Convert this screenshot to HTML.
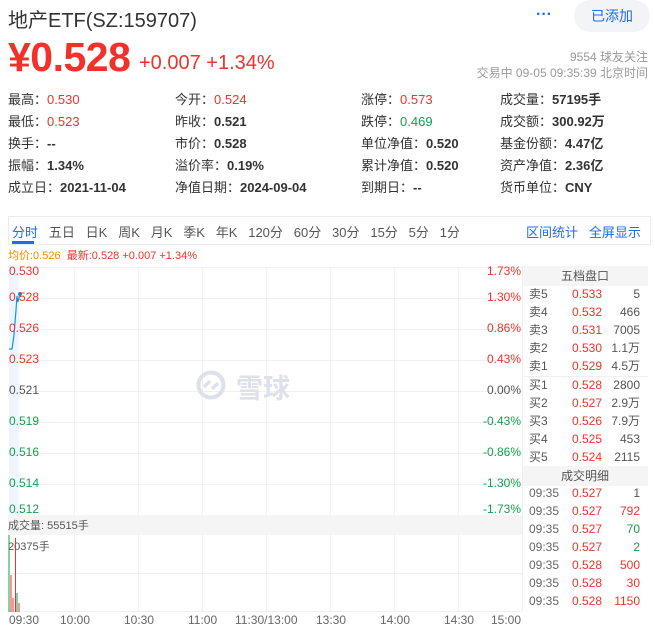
<!DOCTYPE html>
<html><head><meta charset="utf-8"><style>
*{margin:0;padding:0;box-sizing:border-box}
body{width:655px;height:631px;background:#fff;font-family:"Liberation Sans","Noto Sans CJK SC",sans-serif;color:#333;position:relative;overflow:hidden}
.a{position:absolute;white-space:nowrap}
.r{color:#f2322a}.g{color:#12a14b}.b{font-weight:bold}
.q{font-size:13px;color:#333}
.gl{position:absolute;background:#f0f0f0}
.ax{font-size:12px;position:absolute;white-space:nowrap}
.ob{position:absolute;left:522px;width:126px;font-size:12px;height:18px;line-height:18px}
.ob span{position:absolute}
</style></head><body>
<div class="a" style="left:8px;top:4px;font-size:20px;color:#333">地产ETF(SZ:159707)</div>
<div class="a" style="left:536px;top:6px;font-size:16px;color:#1e6ee8;font-weight:bold">···</div>
<div class="a" style="left:574px;top:0px;width:76px;height:32px;border-radius:16px;background:#f2f4f7;color:#1e6ee8;font-size:14px;line-height:32px;text-align:center">已添加</div>
<div class="a r b" style="left:8px;top:34px;font-size:41px;letter-spacing:-0.5px">¥0.528</div>
<div class="a r" style="left:139px;top:52px;font-size:20px">+0.007 +1.34%</div>
<div class="a" style="right:7px;top:48px;font-size:12px;color:#999">9554 球友关注</div>
<div class="a" style="right:7px;top:64px;font-size:12px;color:#999">交易中 09-05 09:35:39 北京时间</div>

<div class="a q" style="left:8px;top:89px">最高：<span class="r">0.530</span></div>
<div class="a q" style="left:175px;top:89px">今开：<span class="r">0.524</span></div>
<div class="a q" style="left:361px;top:89px">涨停：<span class="r">0.573</span></div>
<div class="a q" style="left:500px;top:89px">成交量：<b>57195手</b></div>
<div class="a q" style="left:8px;top:111px">最低：<span class="r">0.523</span></div>
<div class="a q" style="left:175px;top:111px">昨收：<b>0.521</b></div>
<div class="a q" style="left:361px;top:111px">跌停：<span class="g">0.469</span></div>
<div class="a q" style="left:500px;top:111px">成交额：<b>300.92万</b></div>
<div class="a q" style="left:8px;top:133px">换手：<b>--</b></div>
<div class="a q" style="left:175px;top:133px">市价：<b>0.528</b></div>
<div class="a q" style="left:361px;top:133px">单位净值：<b>0.520</b></div>
<div class="a q" style="left:500px;top:133px">基金份额：<b>4.47亿</b></div>
<div class="a q" style="left:8px;top:155px">振幅：<b>1.34%</b></div>
<div class="a q" style="left:175px;top:155px">溢价率：<b>0.19%</b></div>
<div class="a q" style="left:361px;top:155px">累计净值：<b>0.520</b></div>
<div class="a q" style="left:500px;top:155px">资产净值：<b>2.36亿</b></div>
<div class="a q" style="left:8px;top:177px">成立日：<b>2021-11-04</b></div>
<div class="a q" style="left:175px;top:177px">净值日期：<b>2024-09-04</b></div>
<div class="a q" style="left:361px;top:177px">到期日：<b>--</b></div>
<div class="a q" style="left:500px;top:177px">货币单位：<b>CNY</b></div>

<div class="a" style="left:8px;top:216px;width:643px;height:29px;border:1px solid #ececec"></div>
<div class="a" style="left:12px;top:222px;font-size:13px;color:#555;word-spacing:0">
<span style="color:#1e6ee8">分时</span>&nbsp;&nbsp;&nbsp;五日&nbsp;&nbsp;&nbsp;日K&nbsp;&nbsp;&nbsp;周K&nbsp;&nbsp;&nbsp;月K&nbsp;&nbsp;&nbsp;季K&nbsp;&nbsp;&nbsp;年K&nbsp;&nbsp;&nbsp;120分&nbsp;&nbsp;&nbsp;60分&nbsp;&nbsp;&nbsp;30分&nbsp;&nbsp;&nbsp;15分&nbsp;&nbsp;&nbsp;5分&nbsp;&nbsp;&nbsp;1分</div>
<div class="a" style="left:12px;top:241px;width:22px;height:3px;background:#1e6ee8"></div>
<div class="a" style="left:526px;top:222px;font-size:13px;color:#1e6ee8">区间统计&nbsp;&nbsp;&nbsp;全屏显示</div>
<div class="a" style="left:8px;top:247px;font-size:11px"><span style="color:#f08c00">均价:0.526</span>&nbsp;&nbsp;<span class="r">最新:0.528 +0.007 +1.34%</span></div>

<!-- grid -->
<div class="gl" style="left:8px;top:267px;width:514px;height:1px"></div>
<div class="gl" style="left:8px;top:298px;width:514px;height:1px"></div>
<div class="gl" style="left:8px;top:329px;width:514px;height:1px"></div>
<div class="gl" style="left:8px;top:360px;width:514px;height:1px"></div>
<div class="gl" style="left:8px;top:391px;width:514px;height:1px"></div>
<div class="gl" style="left:8px;top:422px;width:514px;height:1px"></div>
<div class="gl" style="left:8px;top:453px;width:514px;height:1px"></div>
<div class="gl" style="left:8px;top:484px;width:514px;height:1px"></div>
<div class="gl" style="left:8px;top:573px;width:514px;height:1px"></div>
<div class="gl" style="left:8px;top:611px;width:514px;height:1px"></div>
<div class="gl" style="left:74px;top:267px;width:1px;height:345px"></div>
<div class="gl" style="left:138px;top:267px;width:1px;height:345px"></div>
<div class="gl" style="left:202px;top:267px;width:1px;height:345px"></div>
<div class="gl" style="left:266px;top:267px;width:1px;height:345px"></div>
<div class="gl" style="left:330px;top:267px;width:1px;height:345px"></div>
<div class="gl" style="left:394px;top:267px;width:1px;height:345px"></div>
<div class="gl" style="left:458px;top:267px;width:1px;height:345px"></div>
<div class="a" style="left:9px;top:267px;width:10px;height:248px;background:#eef5fe"></div>
<div class="a" style="left:8px;top:515px;width:514px;height:20px;background:#f5f5f5"></div>
<div class="a" style="left:8px;top:517px;font-size:11px;color:#555">成交量: 55515手</div>
<div class="a" style="left:8px;top:538px;font-size:11px;color:#555">20375手</div>
<svg class="a" style="left:0;top:260px" width="30" height="360">
<polyline points="9,89 12,89 14,75 16,50 17,36 18,42 19,38 20,33" fill="none" stroke="#1a8cff" stroke-width="1.2"/>
<circle cx="20" cy="34" r="2" fill="#1a8cff"/>
<line x1="9" y1="275" x2="9" y2="352" stroke="#12a14b"/>
<line x1="11" y1="315" x2="11" y2="352" stroke="#f2322a"/>
<line x1="13" y1="338" x2="13" y2="352" stroke="#f2322a"/>
<line x1="15.5" y1="278" x2="15.5" y2="352" stroke="#f2322a"/>
<line x1="17" y1="333" x2="17" y2="352" stroke="#12a14b"/>
<line x1="19" y1="343" x2="19" y2="352" stroke="#f2322a"/>
</svg>
<svg class="a" style="left:196px;top:370px" width="32" height="30"><circle cx="15" cy="15" r="12.5" fill="none" stroke="#dde2ea" stroke-width="4"/><path d="M8 17 L14 11 M16 19 L22 13" stroke="#dde2ea" stroke-width="3.5" fill="none"/></svg>
<div class="a" style="left:236px;top:367px;font-size:27px;color:#dde2ea;font-weight:bold">雪球</div>

<div class="ax r" style="left:9px;top:264px">0.530</div>
<div class="ax r" style="left:9px;top:290px">0.528</div>
<div class="ax r" style="left:9px;top:321px">0.526</div>
<div class="ax r" style="left:9px;top:352px">0.523</div>
<div class="ax" style="left:9px;top:383px;color:#555">0.521</div>
<div class="ax g" style="left:9px;top:414px">0.519</div>
<div class="ax g" style="left:9px;top:445px">0.516</div>
<div class="ax g" style="left:9px;top:476px">0.514</div>
<div class="ax g" style="left:9px;top:502px">0.512</div>
<div class="ax r" style="right:134px;top:264px">1.73%</div>
<div class="ax r" style="right:134px;top:290px">1.30%</div>
<div class="ax r" style="right:134px;top:321px">0.86%</div>
<div class="ax r" style="right:134px;top:352px">0.43%</div>
<div class="ax" style="right:134px;top:383px;color:#555">0.00%</div>
<div class="ax g" style="right:134px;top:414px">-0.43%</div>
<div class="ax g" style="right:134px;top:445px">-0.86%</div>
<div class="ax g" style="right:134px;top:476px">-1.30%</div>
<div class="ax g" style="right:134px;top:502px">-1.73%</div>

<div class="a" style="top:613px;left:9px;font-size:12px;color:#666">09:30</div>
<div class="a" style="top:613px;left:60px;font-size:12px;color:#666">10:00</div>
<div class="a" style="top:613px;left:124px;font-size:12px;color:#666">10:30</div>
<div class="a" style="top:613px;left:188px;font-size:12px;color:#666">11:00</div>
<div class="a" style="top:613px;left:235px;font-size:12px;color:#666">11:30/13:00</div>
<div class="a" style="top:613px;left:316px;font-size:12px;color:#666">13:30</div>
<div class="a" style="top:613px;left:380px;font-size:12px;color:#666">14:00</div>
<div class="a" style="top:613px;left:444px;font-size:12px;color:#666">14:30</div>
<div class="a" style="top:613px;left:491px;font-size:12px;color:#666">15:00</div>

<div class="a" style="left:522px;top:266px;width:126px;height:20px;background:#f5f5f5;font-size:12px;color:#555;text-align:center;line-height:20px">五档盘口</div>
<div class="gl" style="left:522px;top:376px;width:126px;height:1px"></div>
<div class="a" style="left:522px;top:466px;width:126px;height:20px;background:#f5f5f5;font-size:12px;color:#555;text-align:center;line-height:20px">成交明细</div>
<div class="gl" style="left:522px;top:266px;width:1px;height:345px"></div>

<div class="ob" style="top:285px"><span style="left:7px;color:#555">卖5</span><span class="r" style="left:50px">0.533</span><span style="right:8px;color:#555">5</span></div>
<div class="ob" style="top:303px"><span style="left:7px;color:#555">卖4</span><span class="r" style="left:50px">0.532</span><span style="right:8px;color:#555">466</span></div>
<div class="ob" style="top:321px"><span style="left:7px;color:#555">卖3</span><span class="r" style="left:50px">0.531</span><span style="right:8px;color:#555">7005</span></div>
<div class="ob" style="top:339px"><span style="left:7px;color:#555">卖2</span><span class="r" style="left:50px">0.530</span><span style="right:8px;color:#555">1.1万</span></div>
<div class="ob" style="top:357px"><span style="left:7px;color:#555">卖1</span><span class="r" style="left:50px">0.529</span><span style="right:8px;color:#555">4.5万</span></div>
<div class="ob" style="top:376px"><span style="left:7px;color:#555">买1</span><span class="r" style="left:50px">0.528</span><span style="right:8px;color:#555">2800</span></div>
<div class="ob" style="top:394px"><span style="left:7px;color:#555">买2</span><span class="r" style="left:50px">0.527</span><span style="right:8px;color:#555">2.9万</span></div>
<div class="ob" style="top:412px"><span style="left:7px;color:#555">买3</span><span class="r" style="left:50px">0.526</span><span style="right:8px;color:#555">7.9万</span></div>
<div class="ob" style="top:430px"><span style="left:7px;color:#555">买4</span><span class="r" style="left:50px">0.525</span><span style="right:8px;color:#555">453</span></div>
<div class="ob" style="top:448px"><span style="left:7px;color:#555">买5</span><span class="r" style="left:50px">0.524</span><span style="right:8px;color:#555">2115</span></div>

<div class="ob" style="top:484px"><span style="left:7px;color:#666">09:35</span><span class="r" style="left:50px">0.527</span><span style="right:8px;color:#555">1</span></div>
<div class="ob" style="top:502px"><span style="left:7px;color:#666">09:35</span><span class="r" style="left:50px">0.527</span><span class="r" style="right:8px">792</span></div>
<div class="ob" style="top:520px"><span style="left:7px;color:#666">09:35</span><span class="r" style="left:50px">0.527</span><span class="g" style="right:8px">70</span></div>
<div class="ob" style="top:538px"><span style="left:7px;color:#666">09:35</span><span class="r" style="left:50px">0.527</span><span class="g" style="right:8px">2</span></div>
<div class="ob" style="top:556px"><span style="left:7px;color:#666">09:35</span><span class="r" style="left:50px">0.528</span><span class="r" style="right:8px">500</span></div>
<div class="ob" style="top:574px"><span style="left:7px;color:#666">09:35</span><span class="r" style="left:50px">0.528</span><span class="r" style="right:8px">30</span></div>
<div class="ob" style="top:592px"><span style="left:7px;color:#666">09:35</span><span class="r" style="left:50px">0.528</span><span class="r" style="right:8px">1150</span></div>
</body></html>
